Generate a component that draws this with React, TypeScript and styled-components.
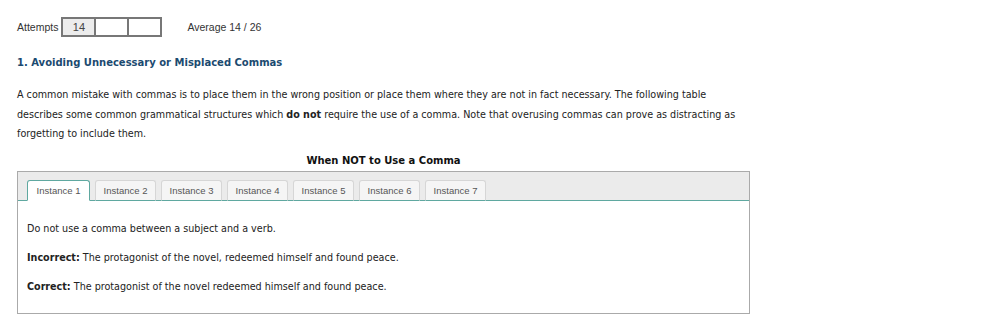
import { useState } from "react"
import styled, { createGlobalStyle } from "styled-components"

const GlobalStyle = createGlobalStyle`
  body {
    margin: 0;
    background: #fff;
    font-family: "DejaVu Sans", Verdana, sans-serif;
    color: #222;
  }
`

const Page = styled.div`
  padding: 17px 17px 0;
  width: 733px;
`

const AttemptsRow = styled.div`
  display: flex;
  align-items: center;
  padding-left: 0;
  font-family: "Liberation Sans", Arial, sans-serif;
  font-size: 10.5px;
  color: #333;
`

const Boxes = styled.div`
  display: flex;
  margin-left: 3px;
  margin-right: 25px;
`

const Box = styled.div<{ $filled?: boolean }>`
  width: 31px;
  height: 16px;
  border: 2px solid #777;
  margin-left: -2px;
  background: ${(p) => (p.$filled ? "#ececec" : "#fff")};
  display: grid;
  place-content: center;
  color: #444;
  font-size: 11px;

  &:first-child {
    margin-left: 0;
  }
`

const Heading = styled.h2`
  margin: 20px 0 0;
  font-size: 10px;
  font-weight: bold;
  color: #1b4a70;
`

const Intro = styled.p`
  margin: 17px 0 0;
  font-size: 9.6px;
  line-height: 19.5px;
  color: #222;
`

const TableTitle = styled.div`
  margin-top: 11px;
  text-align: center;
  font-size: 10px;
  font-weight: bold;
  color: #111;
`

const Tabs = styled.div`
  margin-top: 5px;
  border: 1px solid #aaa;
`

const TabBar = styled.div`
  display: flex;
  gap: 5px;
  padding: 8px 9px 0;
  background: #ebebeb;
  border-bottom: 1px solid #5fa8a0;
`

const Tab = styled.button<{ $active?: boolean }>`
  width: ${(p) => (p.$active ? 63 : 61)}px;
  height: 21px;
  margin-bottom: -1px;
  padding: 0;
  font-family: "Liberation Sans", Arial, sans-serif;
  font-size: 9.5px;
  color: #555;
  background: ${(p) => (p.$active ? "#fff" : "#f5f5f5")};
  border: 1px solid ${(p) => (p.$active ? "#5fa8a0" : "#d6d6d6")};
  border-bottom: 1px solid ${(p) => (p.$active ? "#fff" : "#5fa8a0")};
  border-radius: 3px 3px 0 0;
  cursor: pointer;
`

const Panel = styled.div`
  padding: 22px 9px 21px;
  font-size: 9.6px;
  color: #222;

  p {
    margin: 0 0 18px;
    line-height: 11px;
  }
  p:last-child {
    margin-bottom: 0;
  }
`

const tabs = ["Instance 1", "Instance 2", "Instance 3", "Instance 4", "Instance 5", "Instance 6", "Instance 7"]

export default function App() {
  const [active, setActive] = useState(0)
  return (
    <>
      <GlobalStyle />
      <Page>
        <AttemptsRow>
          Attempts
          <Boxes>
            <Box $filled>14</Box>
            <Box />
            <Box />
          </Boxes>
          Average 14 / 26
        </AttemptsRow>
        <Heading>1. Avoiding Unnecessary or Misplaced Commas</Heading>
        <Intro>
          A common mistake with commas is to place them in the wrong position or place them where they are not in fact
          necessary. The following table describes some common grammatical structures which <b>do not</b> require the
          use of a comma. Note that overusing commas can prove as distracting as forgetting to include them.
        </Intro>
        <TableTitle>When NOT to Use a Comma</TableTitle>
        <Tabs>
          <TabBar>
            {tabs.map((t, i) => (
              <Tab key={t} $active={i === active} onClick={() => setActive(i)}>
                {t}
              </Tab>
            ))}
          </TabBar>
          <Panel>
            <p>Do not use a comma between a subject and a verb.</p>
            <p>
              <b>Incorrect:</b> The protagonist of the novel, redeemed himself and found peace.
            </p>
            <p>
              <b>Correct:</b> The protagonist of the novel redeemed himself and found peace.
            </p>
          </Panel>
        </Tabs>
      </Page>
    </>
  )
}
